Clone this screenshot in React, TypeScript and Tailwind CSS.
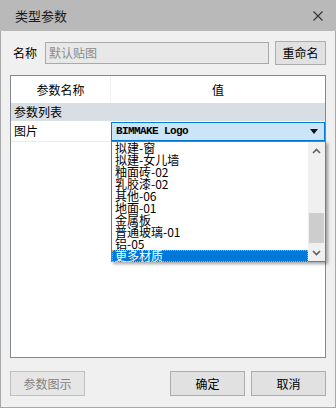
import React from "react";

const ui = { fontFamily: '"Noto Sans CJK SC", "Noto Sans", sans-serif' };
const song = { fontFamily: '"Liberation Mono", "Noto Sans CJK SC", monospace' };

const items = [
  "拟建-窗",
  "拟建-女儿墙",
  "釉面砖-02",
  "乳胶漆-02",
  "其他-06",
  "地面-01",
  "金属板",
  "普通玻璃-01",
  "铝-05",
];

function Chevron({ up }: { up?: boolean }) {
  return (
    <svg width="9" height="6" viewBox="0 0 9 6">
      <path
        d={up ? "M1 5 L4.5 1.5 L8 5" : "M1 1 L4.5 4.5 L8 1"}
        fill="none"
        stroke="#606060"
        strokeWidth="1.6"
      />
    </svg>
  );
}

export default function App() {
  return (
    <div
      className="w-[336px] h-[408px] flex flex-col bg-[#f0f0f0] text-black overflow-hidden"
      style={ui}
    >
      {/* Title bar */}
      <div className="h-[31px] shrink-0 bg-[#b9b9b9] flex items-center justify-between pl-[15px] pr-[13px]">
        <span className="text-[13px] leading-none text-[#1a1a1a]">类型参数</span>
        <svg width="10" height="10" viewBox="0 0 10 10">
          <path d="M0.5 0.5 L9.5 9.5 M9.5 0.5 L0.5 9.5" stroke="#333" strokeWidth="1.1" />
        </svg>
      </div>

      {/* Body */}
      <div className="flex-1 flex flex-col border-x border-b border-[#a8a8a8] pl-[9px] pr-[9px]">
        {/* Name row */}
        <div className="mt-[10px] h-[24px] flex items-center">
          <span className="w-[35px] pl-[3px] text-[12px] leading-none">名称</span>
          <div className="w-[225px] h-[22px] border border-[#a9a9a9] bg-[#e8e8e8] flex items-center pl-[3px] text-[12px] text-[#8c8c8c]">
            默认贴图
          </div>
          <div className="ml-[6px] w-[51px] h-[24px] border border-[#adadad] bg-[#e1e1e1] flex items-center justify-center text-[12px]">
            重命名
          </div>
        </div>

        {/* Grid */}
        <div className="mt-[10px] h-[283px] border border-[#838790] bg-white flex flex-col">
          <div className="h-[27px] flex text-[12px]">
            <div className="w-[100px] border-r border-[#f0f0f0] flex items-center justify-center">参数名称</div>
            <div className="flex-1 flex items-center justify-center">值</div>
          </div>
          <div className="h-[18px] bg-[#d9dde4] flex items-center pl-[3px] text-[12px]">参数列表</div>
          <div className="h-[21px] flex text-[12px] border-b border-[#ececec]">
            <div className="w-[100px] flex items-center pl-[3px]">图片</div>
            <div className="flex-1 relative pt-[1px]">
              <div className="h-[19px] border border-[#0078d7] bg-[#cce4f7] flex items-center justify-between pl-[4px] pr-[6px]">
                <span className="text-[11px] tracking-[-0.6px] leading-none font-bold" style={song}>
                  BIMMAKE Logo
                </span>
                <svg width="8" height="5" viewBox="0 0 8 5">
                  <path d="M0 0 H8 L4 5 Z" fill="#111" />
                </svg>
              </div>
              {/* Dropdown popup */}
              <div className="absolute left-0 top-[20px] w-[215px] h-[121px] bg-white border border-[#7a7a7a] shadow-[2px_2px_3px_rgba(0,0,0,0.35)] flex">
                <div className="flex-1 flex flex-col" style={ui}>
                  {items.map((t) => (
                    <div key={t} className="h-[12px] leading-[12px] text-[12px] pl-[3px] text-black">
                      {t}
                    </div>
                  ))}
                  <div className="h-[12px] leading-[10px] text-[12px] pl-[2px] text-white bg-[#0078d7] border border-dotted border-[#f5a142]">
                    更多材质
                  </div>
                </div>
                <div className="w-[17px] bg-[#f0f0f0] flex flex-col items-center">
                  <div className="h-[17px] flex items-center justify-center">
                    <Chevron up />
                  </div>
                  <div className="flex-1 w-full flex flex-col justify-end px-[1px] pb-[1px]">
                    <div className="h-[30px] bg-[#cdcdcd]" />
                  </div>
                  <div className="h-[17px] flex items-center justify-center">
                    <Chevron />
                  </div>
                </div>
              </div>
            </div>
          </div>
        </div>

        {/* Buttons */}
        <div className="mt-[13px] h-[25px] flex text-[12px]">
          <div className="w-[75px] border border-[#bfbfbf] bg-[#e6e6e6] text-[#838383] flex items-center justify-center">
            参数图示
          </div>
          <div className="ml-auto w-[75px] border border-[#adadad] bg-[#e1e1e1] flex items-center justify-center">
            确定
          </div>
          <div className="ml-[6px] w-[75px] border border-[#adadad] bg-[#e1e1e1] flex items-center justify-center">
            取消
          </div>
        </div>
      </div>
    </div>
  );
}
